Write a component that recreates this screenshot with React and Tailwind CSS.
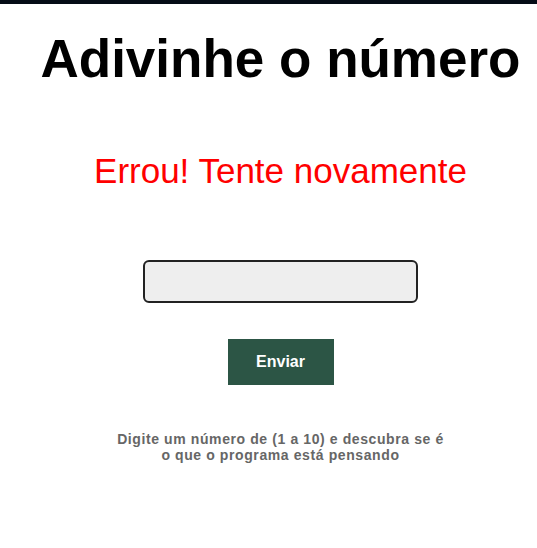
import React from 'react';

const App = () => {
  return (
    <div className="min-h-screen bg-white border-t-4 border-[#050c16] pl-[24px] font-['Liberation_Sans',Arial,sans-serif]">
      <div className="flex flex-col items-center">
        {/* Title */}
        <h1 className="mt-[19px] text-[53px] leading-[72px] font-bold text-black">
          Adivinhe o número
        </h1>

        {/* Feedback */}
        <p className="mt-[56px] text-[35px] leading-[40px] text-[#ff0000]">
          Errou! Tente novamente
        </p>

        {/* Guess input */}
        <input
          type="text"
          autoFocus
          className="mt-[69px] w-[275px] h-[43px] px-2 rounded-md border-2 border-[#222] bg-[#eeeeee] outline-none text-base"
        />

        <button className="mt-[36px] w-[106px] h-[46px] bg-[#2c5545] text-white text-base font-bold">
          Enviar
        </button>

        <p className="mt-[46px] text-center text-[14px] leading-[16px] font-bold tracking-[0.6px] text-[#666]">
          Digite um número de (1 a 10) e descubra se é
          <br />
          o que o programa está pensando
        </p>
      </div>
    </div>
  );
};

export default App;
